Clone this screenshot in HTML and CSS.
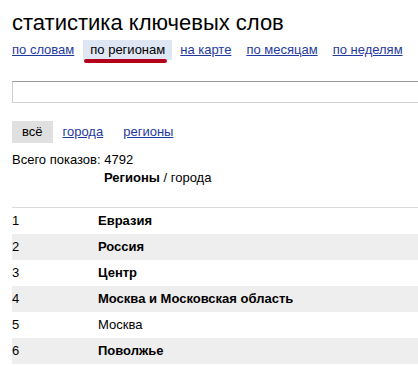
FILE: index.html
```html
<!DOCTYPE html>
<html lang="ru">
<head>
  <meta charset="UTF-8">
  <title>Статистика ключевых слов</title>
  <link rel="stylesheet" href="styles.css">
</head>
<body>
  <div class="page">
    <h1 class="title">статистика ключевых слов</h1>
    <div class="tabs">
      <a href="#" class="tab">по словам</a>
      <span class="tab tab-active">по регионам</span>
      <a href="#" class="tab">на карте</a>
      <a href="#" class="tab">по месяцам</a>
      <a href="#" class="tab">по неделям</a>
    </div>
    <input type="text" class="search">
    <div class="filter">
      <span class="filter-item filter-active">всё</span>
      <a href="#" class="filter-item">города</a>
      <a href="#" class="filter-item">регионы</a>
    </div>
    <div class="total">Всего показов: 4792</div>
    <div class="columns"><b>Регионы</b> / города</div>
    <table class="regions">
      <tr><td class="num">1</td><td class="name"><b>Евразия</b></td></tr>
      <tr><td class="num">2</td><td class="name"><b>Россия</b></td></tr>
      <tr><td class="num">3</td><td class="name"><b>Центр</b></td></tr>
      <tr><td class="num">4</td><td class="name"><b>Москва и Московская область</b></td></tr>
      <tr><td class="num">5</td><td class="name">Москва</td></tr>
      <tr><td class="num">6</td><td class="name"><b>Поволжье</b></td></tr>
    </table>
  </div>
</body>
</html>
```

FILE: styles.css
```css
* {
  box-sizing: border-box;
}

body {
  margin: 0;
  background: #fff;
  color: #000;
  font-family: 'Liberation Sans', Arial, sans-serif;
  font-size: 13px;
  overflow: hidden;
}

.page {
  padding-left: 12px;
}

a {
  color: #1f3a9e;
}

.title {
  margin: 10px 0 0;
  font-size: 22px;
  font-weight: normal;
  line-height: 26px;
  white-space: nowrap;
}

.tabs {
  display: flex;
  margin: 4px 0 0 -7px;
  line-height: 20px;
  white-space: nowrap;
}

.tab {
  flex-shrink: 0;
  padding: 0 7px;
  margin-right: 1px;
}

.tab-active {
  position: relative;
  background: #dee5f3;
  color: #000;
  margin-left: 1px;
}

.tab-active::after {
  content: '';
  position: absolute;
  left: 1px;
  right: 5px;
  bottom: -3px;
  height: 4px;
  border-radius: 2px;
  background: #b3001b;
}

.search {
  display: block;
  width: 420px;
  height: 22px;
  margin-top: 21px;
  border: 1px solid #cfcfcf;
  border-top-color: #999;
  padding: 0 4px;
  font: inherit;
}

.filter {
  display: flex;
  margin-top: 18px;
  line-height: 22px;
  white-space: nowrap;
}

.filter-item {
  padding: 0 10px;
}

.filter-active {
  background: #e0e0e0;
}

.total {
  margin-top: 9px;
  line-height: 16px;
}

.columns {
  margin-top: 2px;
  padding-left: 92px;
  line-height: 16px;
}

.regions {
  width: 406px;
  margin-top: 21px;
  border-collapse: collapse;
  border-top: 1px solid #dadada;
}

.regions td {
  height: 26px;
  padding: 0;
  vertical-align: middle;
}

.regions tr:nth-child(even) {
  background: #eeeeee;
}

.num {
  width: 86px;
}
```
